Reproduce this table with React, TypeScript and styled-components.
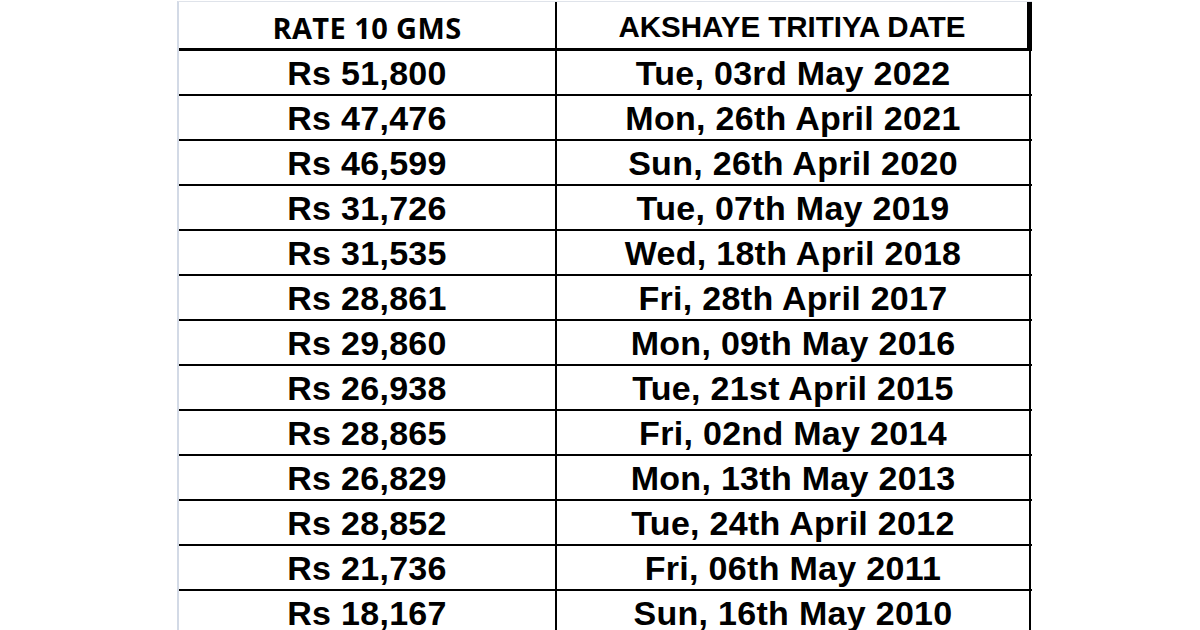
import styled, { createGlobalStyle } from "styled-components";

const GlobalStyle = createGlobalStyle`
    html, body {
        margin: 0;
        padding: 0;
        background: #ffffff;
    }
`;

const Page = styled.div`
    width: 1200px;
    height: 630px;
    overflow: hidden;
    padding: 1px 0 0 177px;
    box-sizing: border-box;
    background: #ffffff;
`;

const Sheet = styled.div`
    display: flex;
    flex-direction: column;
    width: fit-content;
    border-left: 2px solid #d3dae6;
    border-top: 1px solid #dfe3ea;
`;

const Row = styled.div<{ $head?: boolean }>`
    display: grid;
    grid-template-columns: 378px ${(p) => (p.$head ? "475px" : "474px")};
    height: ${(p) => (p.$head ? "46px" : "43px")};
    border-bottom: ${(p) => (p.$head ? "3px" : "2px")} solid #000;
`;

const Cell = styled.div<{ $last?: boolean; $head?: boolean }>`
    display: flex;
    align-items: center;
    justify-content: center;
    color: #000;
    white-space: nowrap;
    border-right: ${(p) => (p.$last && p.$head ? "5px" : "2px")} solid #000;
    font-family: "Liberation Sans", Arial, sans-serif;
    font-weight: 700;
    font-size: 34px;
    letter-spacing: 0.3px;
    padding-top: 2px;
`;

const HeadCell = styled(Cell)`
    font-size: 29.5px;
    letter-spacing: 0;
    padding-top: 3px;
`;

const RateHead = styled(HeadCell)`
    font-family: "Open Sans", "Liberation Sans", sans-serif;
    font-size: 29px;
    letter-spacing: 0.4px;
    padding-top: 4px;
`;

const rows: [string, string][] = [
    ["Rs 51,800", "Tue, 03rd May 2022"],
    ["Rs 47,476", "Mon, 26th April 2021"],
    ["Rs 46,599", "Sun, 26th April 2020"],
    ["Rs 31,726", "Tue, 07th May 2019"],
    ["Rs 31,535", "Wed, 18th April 2018"],
    ["Rs 28,861", "Fri, 28th April 2017"],
    ["Rs 29,860", "Mon, 09th May 2016"],
    ["Rs 26,938", "Tue, 21st April 2015"],
    ["Rs 28,865", "Fri, 02nd May 2014"],
    ["Rs 26,829", "Mon, 13th May 2013"],
    ["Rs 28,852", "Tue, 24th April 2012"],
    ["Rs 21,736", "Fri, 06th May 2011"],
    ["Rs 18,167", "Sun, 16th May 2010"]
];

const App = () => {
    return (
        <>
            <GlobalStyle />
            <Page>
                <Sheet>
                    <Row $head>
                        <RateHead $head>RATE 10 GMS</RateHead>
                        <HeadCell $head $last>
                            AKSHAYE TRITIYA DATE
                        </HeadCell>
                    </Row>
                    {rows.map(([rate, date]) => (
                        <Row key={date}>
                            <Cell>{rate}</Cell>
                            <Cell $last>{date}</Cell>
                        </Row>
                    ))}
                </Sheet>
            </Page>
        </>
    );
};

export default App;
